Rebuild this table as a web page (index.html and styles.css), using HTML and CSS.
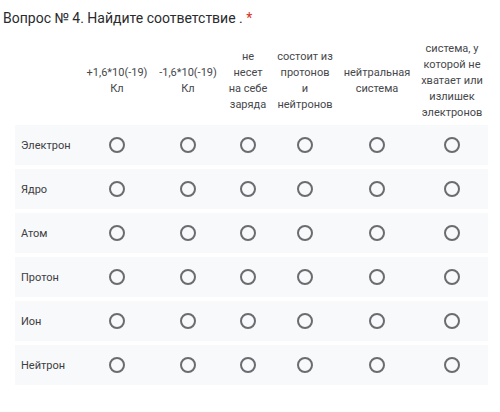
FILE: index.html
```html
<!DOCTYPE html>
<html lang="ru">
<head>
<meta charset="utf-8">
<link rel="stylesheet" href="styles.css">
</head>
<body>
<div class="page">
  <div class="title">Вопрос № 4. Найдите соответствие . <span class="req">*</span></div>
  <div class="grid">
    <div class="head"></div>
    <div class="head">+1,6*10(-19)<br>Кл</div>
    <div class="head">-1,6*10(-19)<br>Кл</div>
    <div class="head">не<br>несет<br>на себе<br>заряда</div>
    <div class="head">состоит из<br>протонов<br>и<br>нейтронов</div>
    <div class="head">нейтральная<br>система</div>
    <div class="head">система, у<br>которой не<br>хватает или<br>излишек<br>электронов</div>
  </div>
  <div class="rows">
    <div class="row"><div class="label">Электрон</div><div class="cell"><span class="radio"></span></div><div class="cell"><span class="radio"></span></div><div class="cell"><span class="radio"></span></div><div class="cell"><span class="radio"></span></div><div class="cell"><span class="radio"></span></div><div class="cell"><span class="radio"></span></div></div>
    <div class="row"><div class="label">Ядро</div><div class="cell"><span class="radio"></span></div><div class="cell"><span class="radio"></span></div><div class="cell"><span class="radio"></span></div><div class="cell"><span class="radio"></span></div><div class="cell"><span class="radio"></span></div><div class="cell"><span class="radio"></span></div></div>
    <div class="row"><div class="label">Атом</div><div class="cell"><span class="radio"></span></div><div class="cell"><span class="radio"></span></div><div class="cell"><span class="radio"></span></div><div class="cell"><span class="radio"></span></div><div class="cell"><span class="radio"></span></div><div class="cell"><span class="radio"></span></div></div>
    <div class="row"><div class="label">Протон</div><div class="cell"><span class="radio"></span></div><div class="cell"><span class="radio"></span></div><div class="cell"><span class="radio"></span></div><div class="cell"><span class="radio"></span></div><div class="cell"><span class="radio"></span></div><div class="cell"><span class="radio"></span></div></div>
    <div class="row"><div class="label">Ион</div><div class="cell"><span class="radio"></span></div><div class="cell"><span class="radio"></span></div><div class="cell"><span class="radio"></span></div><div class="cell"><span class="radio"></span></div><div class="cell"><span class="radio"></span></div><div class="cell"><span class="radio"></span></div></div>
    <div class="row"><div class="label">Нейтрон</div><div class="cell"><span class="radio"></span></div><div class="cell"><span class="radio"></span></div><div class="cell"><span class="radio"></span></div><div class="cell"><span class="radio"></span></div><div class="cell"><span class="radio"></span></div><div class="cell"><span class="radio"></span></div></div>
  </div>
</div>
</body>
</html>
```
FILE: styles.css
```css
html, body {
  margin: 0;
  padding: 0;
  background: #ffffff;
}
.page {
  width: 500px;
  height: 412px;
  font-family: Roboto, "Noto Sans", Arial, sans-serif;
  color: #202124;
}
.title {
  padding: 9px 0 0 3px;
  font-size: 14px;
  line-height: 18px;
  color: #2a2b2e;
}
.req {
  color: #d93025;
}
.grid,
.row {
  display: grid;
  grid-template-columns: 67px 70px 72px 48px 66px 78px 72px;
  margin-left: 15px;
  width: 473px;
}
.grid {
  margin-top: 13px;
  height: 82px;
  align-items: center;
}
.head {
  text-align: center;
  font-size: 11px;
  line-height: 16px;
  color: #46484c;
  white-space: nowrap;
}
.rows {
  margin-top: 3px;
  display: flex;
  flex-direction: column;
  gap: 4px;
}
.row {
  height: 40px;
  background: #f8f9fa;
  align-items: center;
}
.label {
  padding-left: 6px;
  font-size: 11px;
  color: #3c4043;
}
.cell {
  display: flex;
  justify-content: center;
  align-items: center;
}
.radio {
  width: 12px;
  height: 12px;
  border: 2px solid #6a6c70;
  border-radius: 50%;
}
```
